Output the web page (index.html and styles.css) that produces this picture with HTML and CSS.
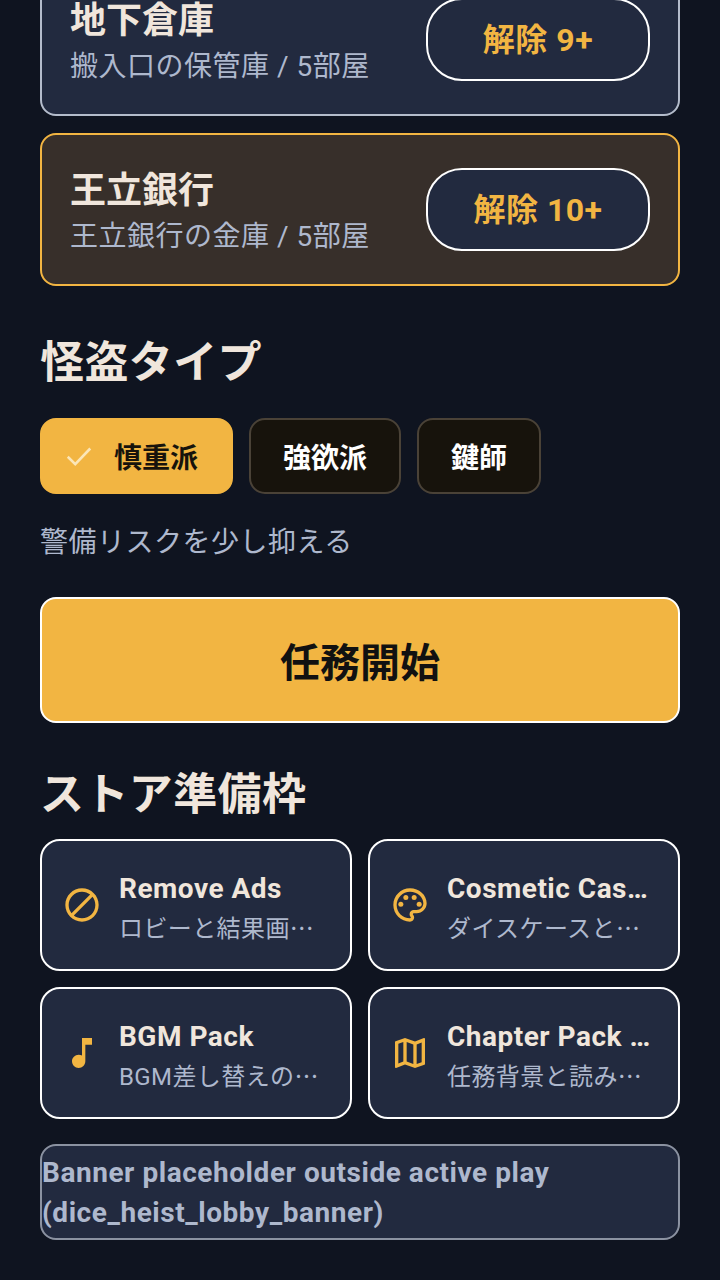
FILE: index.html
```html
<!DOCTYPE html>
<html lang="ja">
<head>
    <meta charset="UTF-8">
    <meta name="viewport" content="width=device-width, initial-scale=1.0">
    <title>Dice Heist Lobby</title>
    <link rel="stylesheet" href="styles.css">
</head>
<body>
    <main class="lobby">
        <div class="stage-card stage-cut">
            <div class="stage-info">
                <div class="stage-name">地下倉庫</div>
                <div class="stage-sub">搬入口の保管庫 / 5部屋</div>
            </div>
            <button class="unlock-btn" type="button">解除 9+</button>
        </div>
        <div class="stage-card stage-active">
            <div class="stage-info">
                <div class="stage-name">王立銀行</div>
                <div class="stage-sub">王立銀行の金庫 / 5部屋</div>
            </div>
            <button class="unlock-btn" type="button">解除 10+</button>
        </div>

        <h2 class="section-title type-title">怪盗タイプ</h2>
        <div class="chip-row">
            <button class="chip chip-selected" type="button">
                <svg class="chip-check" viewBox="0 0 24 24"><path d="M4.5 12.5L9.5 17.5L19.5 7"/></svg>
                慎重派
            </button>
            <button class="chip" type="button">強欲派</button>
            <button class="chip" type="button">鍵師</button>
        </div>
        <p class="type-desc">警備リスクを少し抑える</p>

        <button class="start-btn" type="button">任務開始</button>

        <h2 class="section-title store-title">ストア準備枠</h2>
        <div class="store-grid">
            <div class="store-item">
                <svg class="store-icon" viewBox="0 0 24 24"><path d="M12 2C6.48 2 2 6.48 2 12s4.48 10 10 10 10-4.48 10-10S17.52 2 12 2zM4 12c0-4.42 3.58-8 8-8 1.85 0 3.55.63 4.9 1.69L5.69 16.9C4.63 15.55 4 13.85 4 12zm8 8c-1.85 0-3.55-.63-4.9-1.69L18.31 7.1C19.37 8.45 20 10.15 20 12c0 4.42-3.58 8-8 8z"/></svg>
                <div class="store-text">
                    <div class="store-name">Remove Ads</div>
                    <div class="store-sub">ロビーと結果画<span class="more">…</span></div>
                </div>
            </div>
            <div class="store-item">
                <svg class="store-icon" viewBox="0 0 24 24"><path d="M12 22C6.49 22 2 17.51 2 12S6.49 2 12 2s10 4.04 10 9c0 3.31-2.69 6-6 6h-1.77c-.28 0-.5.22-.5.5 0 .12.05.23.13.33.41.47.64 1.06.64 1.67 0 1.38-1.12 2.5-2.5 2.5zm0-18c-4.41 0-8 3.59-8 8s3.59 8 8 8c.28 0 .5-.22.5-.5 0-.16-.08-.28-.14-.35-.41-.46-.63-1.05-.63-1.65 0-1.38 1.12-2.5 2.5-2.5H16c2.21 0 4-1.79 4-4 0-3.86-3.59-7-8-7z"/><circle cx="6.5" cy="11.5" r="1.5"/><circle cx="9.5" cy="7.5" r="1.5"/><circle cx="14.5" cy="7.5" r="1.5"/><circle cx="17.5" cy="11.5" r="1.5"/></svg>
                <div class="store-text">
                    <div class="store-name">Cosmetic Cas…</div>
                    <div class="store-sub">ダイスケースと<span class="more">…</span></div>
                </div>
            </div>
            <div class="store-item">
                <svg class="store-icon" viewBox="0 0 24 24"><path d="M12 3v10.55c-.59-.34-1.27-.55-2-.55-2.21 0-4 1.79-4 4s1.79 4 4 4 4-1.79 4-4V7h4V3h-6z"/></svg>
                <div class="store-text">
                    <div class="store-name">BGM Pack</div>
                    <div class="store-sub">BGM差し替えの<span class="more">…</span></div>
                </div>
            </div>
            <div class="store-item">
                <svg class="store-icon" viewBox="0 0 24 24"><path d="M20.5 3l-.16.03L15 5.1 9 3 3.36 4.9c-.21.07-.36.25-.36.48V20.5c0 .28.22.5.5.5l.16-.03L9 18.9l6 2.1 5.64-1.9c.21-.07.36-.25.36-.48V3.5c0-.28-.22-.5-.5-.5zM10 5.47l4 1.4v11.66l-4-1.4V5.47zm-5 .99l3-1.01v11.7l-3 1.16V6.46zm14 11.08l-3 1.01V6.86l3-1.16v11.84z"/></svg>
                <div class="store-text">
                    <div class="store-name">Chapter Pack …</div>
                    <div class="store-sub">任務背景と読み<span class="more">…</span></div>
                </div>
            </div>
        </div>

        <div class="banner">Banner placeholder outside active play (dice_heist_lobby_banner)</div>
    </main>
</body>
</html>
```

FILE: styles.css
```css
* {
    box-sizing: border-box;
}

html, body {
    margin: 0;
    padding: 0;
    height: 1280px;
    overflow: hidden;
    background-color: #0f1420;
}

body {
    font-family: Roboto, "Noto Sans CJK JP", sans-serif;
    color: #f0e6dc;
}

button {
    font-family: inherit;
    cursor: pointer;
}

.lobby {
    display: flex;
    flex-direction: column;
    padding: 0 40px;
}

.stage-card {
    display: flex;
    align-items: center;
    justify-content: space-between;
    height: 153px;
    padding: 0 28px;
    margin-bottom: 17px;
    background-color: #222a3f;
    border: 2px solid #b4bccb;
    border-radius: 16px;
}

/* list is scrolled, first card runs off the top */
.stage-cut {
    margin-top: -37px;
}

.stage-active {
    background-color: #372f2a;
    border-color: #f2b542;
}

.stage-info {
    padding-top: 7px;
}

.stage-name {
    font-size: 36px;
    line-height: 48px;
    font-weight: 700;
}

.stage-sub {
    font-size: 28px;
    line-height: 44px;
    letter-spacing: 0.5px;
    color: #aeb8cd;
}

.unlock-btn {
    width: 224px;
    height: 83px;
    padding: 0 0 6px;
    background-color: #222a3f;
    border: 2px solid #fff;
    border-radius: 36px;
    color: #f2b542;
    font-size: 32px;
    font-weight: 700;
    letter-spacing: 0.5px;
}

.section-title {
    margin: 0;
    font-size: 44px;
    line-height: 56px;
    font-weight: 700;
    letter-spacing: 0.4px;
}

.type-title {
    margin-top: 32px;
}

.chip-row {
    display: flex;
    gap: 16px;
    margin-top: 27px;
}

.chip {
    display: flex;
    align-items: center;
    height: 76px;
    padding: 0 32px;
    background-color: #17130c;
    border: 2px solid #4a4237;
    border-radius: 16px;
    color: #fff;
    font-size: 28px;
    font-weight: 700;
}

.chip-selected {
    padding: 0 33px 0 19px;
    background-color: #f2b542;
    border-color: #f2b542;
    color: #17130c;
}

.chip-check {
    width: 36px;
    height: 36px;
    margin-right: 17px;
    fill: none;
    stroke: #fbe6b8;
    stroke-width: 1.7;
}

.type-desc {
    margin: 28px 0 0;
    font-size: 28px;
    line-height: 42px;
    letter-spacing: 0.5px;
    color: #aeb8cd;
}

.start-btn {
    width: 100%;
    height: 126px;
    margin-top: 33px;
    background-color: #f2b542;
    border: 2px solid #fff;
    border-radius: 16px;
    color: #111;
    font-size: 40px;
    font-weight: 700;
}

.store-title {
    margin-top: 44px;
}

.store-grid {
    display: grid;
    grid-template-columns: minmax(0, 1fr) minmax(0, 1fr);
    gap: 16px;
    margin-top: 16px;
}

.store-item {
    display: flex;
    align-items: center;
    gap: 17px;
    height: 132px;
    padding: 0 20px;
    background-color: #222a3f;
    border: 2px solid #fff;
    border-radius: 20px;
}

.store-icon {
    flex: none;
    width: 40px;
    height: 40px;
    fill: #f2b542;
}

.store-text {
    min-width: 0;
    flex: 1;
    padding-top: 8px;
}

.store-name {
    font-size: 28px;
    line-height: 38px;
    font-weight: 700;
    letter-spacing: 0.5px;
    white-space: nowrap;
}

.store-sub {
    font-size: 24px;
    line-height: 38px;
    letter-spacing: 0.4px;
    color: #aeb8cd;
    white-space: nowrap;
}

/* cut-off marker sits mid-height in the CJK font */
.more {
    font-family: "Noto Sans CJK JP", sans-serif;
}

.banner {
    height: 96px;
    margin-top: 25px;
    padding-top: 7px;
    background-color: #222a3f;
    border: 2px solid #8b92a1;
    border-radius: 16px;
    color: #aeb8cd;
    font-size: 28px;
    line-height: 40px;
    font-weight: 700;
    letter-spacing: 0.55px;
}
```
